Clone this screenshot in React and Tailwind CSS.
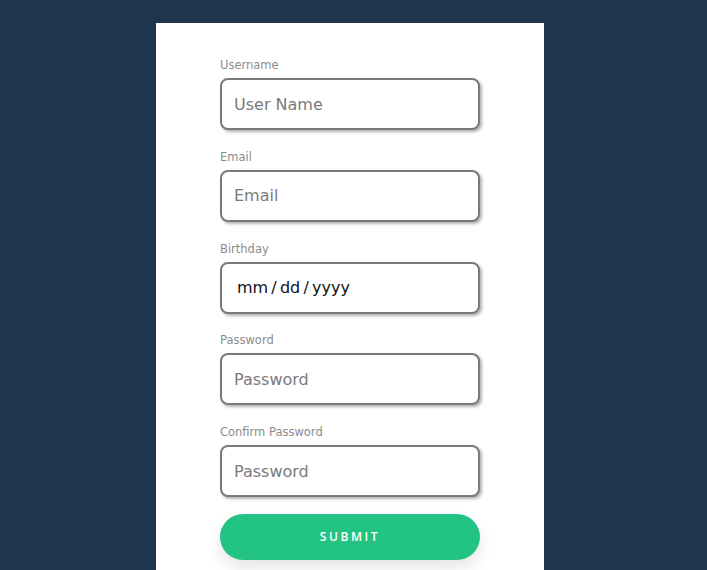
import { useState } from 'react';

const Field = ({ label, type = 'text', placeholder, dark }) => (
    <div className="flex flex-col">
        <label className="text-[11.5px] leading-[15px] text-[#8c8c8c] mb-[5px]">{label}</label>
        <input
            type={type}
            placeholder={placeholder}
            className={`h-[52px] w-full rounded-[8px] border-2 border-[#7a7a7a] bg-white px-[12px] text-[16px] outline-none shadow-[2px_2px_3px_rgba(0,0,0,0.3)] ${
                dark ? 'placeholder:text-[#111] pl-[15px]' : 'placeholder:text-[#7b7b7b]'
            }`}
        />
    </div>
);

export default function App() {
    const [submitted, setSubmitted] = useState(false);

    return (
        <div className="min-h-[570px] bg-[#1f344d] pt-[23px] flex justify-center pr-[7px] font-['DejaVu_Sans',sans-serif]">
            <div className="w-[388px] bg-white px-[64px] pt-[35px] pb-[20px]">
                <form
                    className="flex flex-col gap-[19.75px]"
                    onSubmit={(e) => {
                        e.preventDefault();
                        setSubmitted(true);
                    }}
                >
                    <Field label="Username" placeholder="User Name" />
                    <Field label="Email" type="email" placeholder="Email" />
                    <Field label="Birthday" placeholder={'mm\u2009/\u2009dd\u2009/\u2009yyyy'} dark />
                    <Field label="Password" type="password" placeholder="Password" />
                    <Field label="Confirm Password" type="password" placeholder="Password" />
                    <button
                        type="submit"
                        className="-mt-[3px] h-[46px] w-full rounded-full bg-[#23c483] text-white text-[12px] font-semibold tracking-[2.6px] font-['Open_Sans',sans-serif] shadow-[0_8px_15px_rgba(0,0,0,0.1)]"
                    >
                        {submitted ? 'SUBMITTED' : 'SUBMIT'}
                    </button>
                </form>
            </div>
        </div>
    );
}
